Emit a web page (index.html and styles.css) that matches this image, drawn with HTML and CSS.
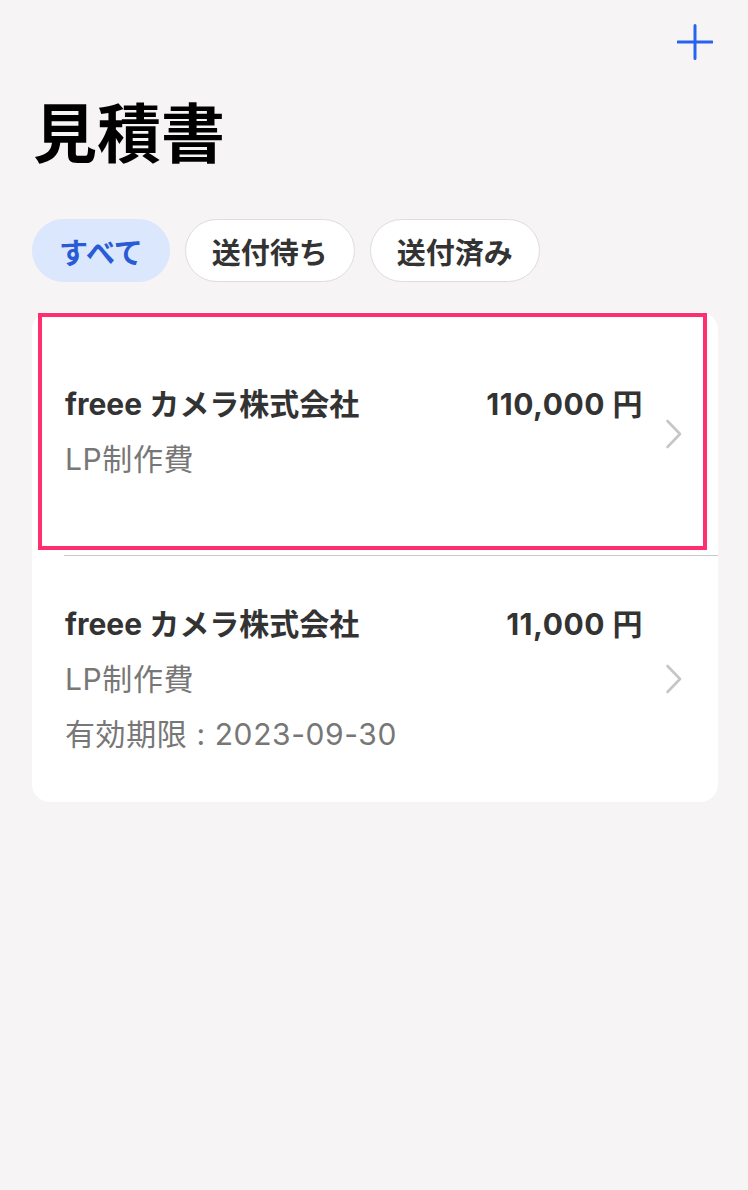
FILE: index.html
```html
<!DOCTYPE html>
<html lang="ja">
<head>
<meta charset="utf-8">
<title>見積書</title>
<link rel="stylesheet" href="styles.css">
</head>
<body>
<div class="page">
  <header class="topbar">
    <button class="add-btn" aria-label="追加">
      <svg width="36" height="36" viewBox="0 0 36 36"><path d="M18 1.5V34.5M1 18H35" stroke="#2962ef" stroke-width="3" stroke-linecap="round" fill="none"/></svg>
    </button>
  </header>
  <h1 class="title">見積書</h1>
  <nav class="chips">
    <span class="chip chip-active">すべて</span>
    <span class="chip">送付待ち</span>
    <span class="chip">送付済み</span>
  </nav>
  <section class="card">
    <div class="item item-first">
      <div class="item-body">
        <div class="item-head">
          <span class="client">freee カメラ株式会社</span>
          <span class="amount">110,000 円</span>
        </div>
        <div class="sub">LP制作費</div>
      </div>
      <svg class="chev" width="18" height="30" viewBox="0 0 18 30"><path d="M2.5 2L15 15L2.5 28" stroke="#c6c6c9" stroke-width="2.6" fill="none" stroke-linecap="round" stroke-linejoin="round"/></svg>
      <div class="highlight"></div>
    </div>
    <div class="item">
      <div class="item-body">
        <div class="item-head">
          <span class="client">freee カメラ株式会社</span>
          <span class="amount">11,000 円</span>
        </div>
        <div class="sub">LP制作費</div>
        <div class="sub">有効期限 : 2023-09-30</div>
      </div>
      <svg class="chev" width="18" height="30" viewBox="0 0 18 30"><path d="M2.5 2L15 15L2.5 28" stroke="#c6c6c9" stroke-width="2.6" fill="none" stroke-linecap="round" stroke-linejoin="round"/></svg>
    </div>
  </section>
</div>
</body>
</html>
```

FILE: styles.css
```css
* { box-sizing: border-box; }
html, body {
  margin: 0;
  padding: 0;
  background: #f6f4f5;
}
body {
  font-family: "Noto Sans CJK JP", "Noto Sans", sans-serif;
  color: #333;
  width: 748px;
  min-height: 1190px;
}
.page {
  padding: 0 30px 0 32px;
}
.topbar {
  height: 97px;
  display: flex;
  justify-content: flex-end;
  align-items: flex-start;
  padding-top: 24px;
  padding-right: 5px;
}
.add-btn {
  border: 0;
  background: none;
  padding: 0;
  width: 36px;
  height: 36px;
  display: block;
}
.add-btn svg { display: block; }
.title {
  margin: 0;
  font-size: 64px;
  line-height: 64px;
  font-weight: 700;
  color: #000;
  padding-left: 1px;
}
.chips {
  display: flex;
  gap: 15px;
  margin-top: 58px;
}
.chip {
  height: 63px;
  padding: 0 26px;
  border-radius: 32px;
  border: 1px solid #dedcdd;
  background: #fff;
  font-size: 29px;
  font-weight: 700;
  color: #333;
  display: flex;
  align-items: center;
}
.chip-active {
  background: #dbe7fd;
  border-color: #dbe7fd;
  color: #2a5bd6;
}
.card {
  margin-top: 30px;
  background: #fff;
  border-radius: 18px;
}
.item {
  position: relative;
  min-height: 246px;
  display: flex;
  align-items: center;
  padding: 40px 35px 40px 33px;
}
.item-first {
  min-height: 243px;
  padding-top: 38px;
  padding-bottom: 42px;
}
.item + .item::before {
  content: "";
  position: absolute;
  top: -1px;
  left: 32px;
  right: 0;
  height: 1px;
  background: #c8c8cb;
}
.item-body {
  flex: 1;
  display: flex;
  flex-direction: column;
  gap: 13px;
}
.item-head {
  display: flex;
  justify-content: space-between;
  align-items: baseline;
}
.client, .amount, .sub {
  font-family: "Inter", "Noto Sans CJK JP", sans-serif;
}
.client, .amount {
  font-size: 30px;
  line-height: 42px;
  font-weight: 700;
  color: #333;
}
.amount {
  letter-spacing: 0.5px;
}
.sub {
  font-size: 30px;
  line-height: 42px;
  letter-spacing: 0.6px;
  color: #777;
}
.chev {
  display: block;
  margin-left: 22px;
  flex: none;
}
.item-first .chev {
  position: relative;
  top: 2px;
}
.item-first + .item { margin-top: 1px; }
.highlight {
  position: absolute;
  left: 6px;
  right: 11px;
  top: 1px;
  bottom: 5px;
  border: 4px solid #ff2e6e;
  pointer-events: none;
}
```
